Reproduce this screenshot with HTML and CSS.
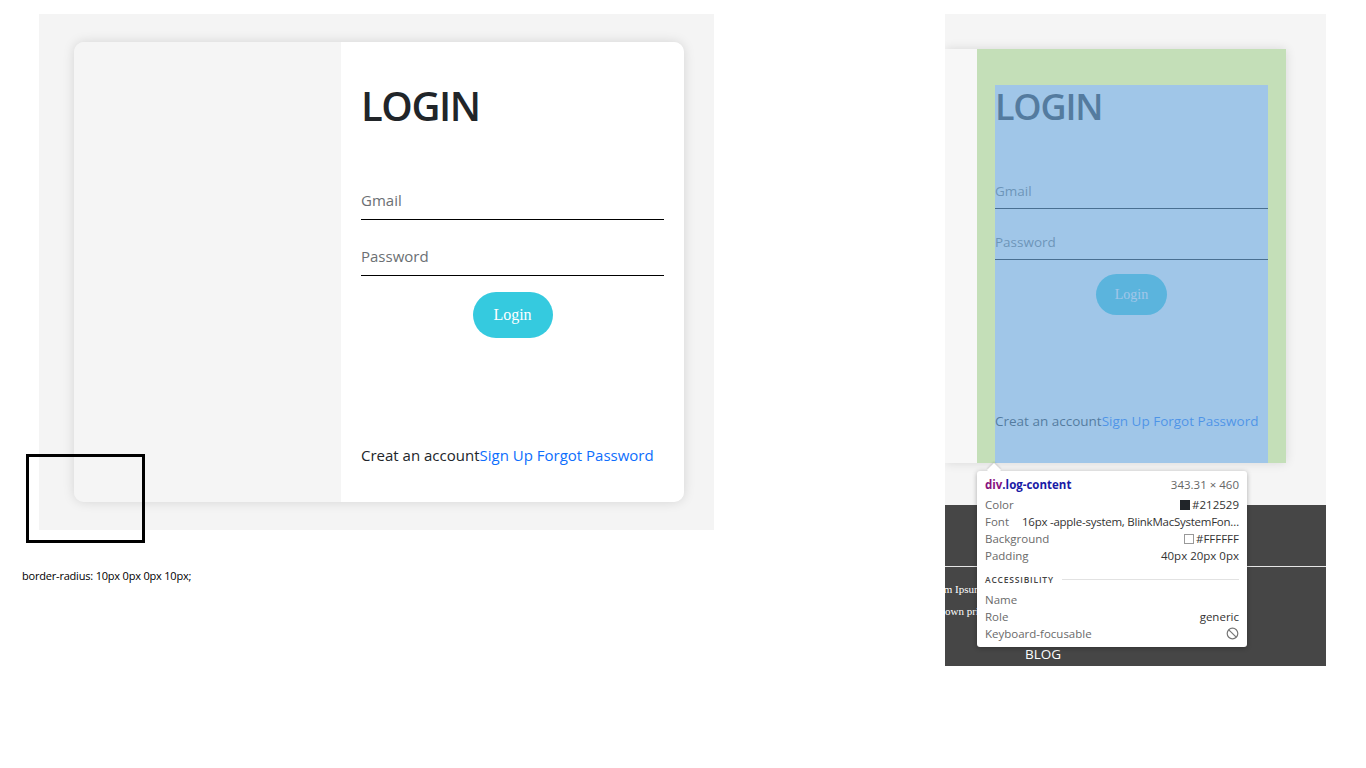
FILE: index.html
```html
<!DOCTYPE html>
<html lang="en">
<head>
<meta charset="utf-8">
<title>Login layout</title>
<link rel="stylesheet" href="styles.css">
</head>
<body>
<div class="stage">
  <div class="shot-left">
    <div class="panel">
      <div class="card">
        <div class="card-side"></div>
        <div class="log-content">
          <h1 class="title">LOGIN</h1>
          <input class="field field-first" type="text" placeholder="Gmail">
          <input class="field" type="password" placeholder="Password">
          <div class="btn-row"><button class="btn" type="button">Login</button></div>
          <p class="foot">Creat an account<a class="lnk">Sign Up</a> <a class="lnk">Forgot Password</a></p>
        </div>
      </div>
    </div>
    <p class="note">border-radius: 10px 0px 0px 10px;</p>
    <div class="marker"></div>
  </div>

  <div class="shot-right">
    <div class="r-top">
      <div class="r-card">
        <div class="r-stub"></div>
        <div class="r-log">
          <h1 class="r-title">LOGIN</h1>
          <input class="r-field r-field-first" type="text" placeholder="Gmail">
          <input class="r-field" type="password" placeholder="Password">
          <div class="btn-row"><button class="r-btn" type="button">Login</button></div>
          <p class="r-foot">Creat an account<a class="lnk">Sign Up</a> <a class="lnk">Forgot Password</a></p>
          <div class="hl-pad"></div>
          <div class="hl-content"></div>
        </div>
      </div>
    </div>
    <div class="r-footer">
      <div class="r-band"></div>
      <p class="r-text r-t1">Lorem Ipsum</p>
      <p class="r-text r-t2">unknown printer</p>
      <p class="r-blog">BLOG</p>
    </div>
    <div class="tip">
      <div class="tip-row tip-head"><span class="sel"><span class="sel-tag">div</span>.log-content</span><span class="dim">343.31 × 460</span></div>
      <div class="tip-row"><span class="lbl">Color</span><span class="val"><i class="sw sw-dark"></i>#212529</span></div>
      <div class="tip-row"><span class="lbl">Font</span><span class="val font-val">16px -apple-system, BlinkMacSystemFon…</span></div>
      <div class="tip-row"><span class="lbl">Background</span><span class="val"><i class="sw sw-white"></i>#FFFFFF</span></div>
      <div class="tip-row"><span class="lbl">Padding</span><span class="val">40px 20px 0px</span></div>
      <div class="tip-sec"><span>ACCESSIBILITY</span><i class="sec-line"></i></div>
      <div class="tip-row"><span class="lbl">Name</span><span class="val"></span></div>
      <div class="tip-row"><span class="lbl">Role</span><span class="val">generic</span></div>
      <div class="tip-row"><span class="lbl">Keyboard-focusable</span><span class="val">
        <svg class="no-icon" width="13" height="13" viewBox="0 0 13 13"><circle cx="6.5" cy="6.5" r="5.3" fill="none" stroke="#777" stroke-width="1.2"/><line x1="2.8" y1="2.8" x2="10.2" y2="10.2" stroke="#777" stroke-width="1.2"/></svg>
      </span></div>
    </div>
  </div>
</div>
</body>
</html>
```

FILE: styles.css
```css
* { box-sizing: border-box; }
html, body { margin: 0; padding: 0; background: #ffffff; }
body { width: 1366px; height: 768px; overflow: hidden; font-family: "Open Sans", "Noto Sans", sans-serif; color: #212529; }

.stage { display: flex; align-items: flex-start; padding: 14px 40px 0 22px; }

/* ---------- left screenshot ---------- */
.shot-left { position: relative; width: 692px; }
.panel { margin-left: 17px; width: 675px; height: 516px; background: #f4f4f4; padding: 28px 30px 0 35px; }
.card { display: flex; height: 460px; width: 610px; border-radius: 10px; box-shadow: 0 0 12px rgba(0,0,0,0.13); overflow: hidden; }
.card-side { width: 267px; background: #f5f5f5; }
.log-content { flex: 1; background: #ffffff; padding: 40px 20px 0; display: flex; flex-direction: column; }
.title { margin: 0 0 52px; font-size: 40px; line-height: 48px; font-weight: 600; color: #212529; letter-spacing: -1.4px; }
.field { display: block; width: 100%; height: 38px; border: 0; border-bottom: 1.5px solid #000; background: transparent; font-family: "Open Sans", sans-serif; font-size: 15px; padding: 0 0 1px; color: #212529; outline: none; }
.field::placeholder { color: #6b6f73; }
.field + .field { margin-top: 18px; }
.btn-row { display: flex; justify-content: center; margin-top: 16px; }
.btn { width: 80px; height: 46px; border: 0; border-radius: 23px; background: #35cadf; color: #ffffff; font-family: "Liberation Serif", serif; font-size: 16px; padding: 0; }
.foot { margin: auto 0 35px; font-size: 15px; line-height: 24px; white-space: nowrap; }
.lnk { color: #0d6efd; }

.note { margin: 39px 0 0; font-size: 11px; line-height: 14px; color: #000; letter-spacing: -0.2px; }
.marker { position: absolute; left: 4px; top: 440px; width: 119px; height: 89px; border: 3px solid #000; }

/* ---------- right screenshot ---------- */
.shot-right { position: relative; margin-left: auto; width: 381px; height: 652px; overflow: hidden; }
.r-top { height: 491px; background: #f5f5f5; padding: 35px 40px 0 0; }
.r-card { display: flex; height: 414px; box-shadow: 0 0 10px rgba(0,0,0,0.12); }
.r-stub { width: 32px; background: #f7f7f7; }
.r-log { position: relative; width: 309px; background: #ffffff; padding: 36px 18px 0; display: flex; flex-direction: column; }
.r-title { margin: 0 0 47px; font-size: 36px; line-height: 43px; font-weight: 600; color: #212529; letter-spacing: -1.2px; }
.r-field { display: block; width: 100%; height: 34px; border: 0; border-bottom: 1.5px solid #000; background: transparent; font-family: "Open Sans", sans-serif; font-size: 13.5px; padding: 0 0 1px; outline: none; }
.r-field::placeholder { color: #6b6f73; }
.r-field + .r-field { margin-top: 17px; }
.r-log .btn-row { margin-top: 14px; }
.r-btn { width: 71px; height: 41px; border: 0; border-radius: 21px; background: #35cadf; color: #ffffff; font-family: "Liberation Serif", serif; font-size: 14px; padding: 0; }
.r-foot { margin: auto 0 31px; font-size: 13.5px; line-height: 22px; white-space: nowrap; }

.hl-pad { position: absolute; inset: 0; border-style: solid; border-color: rgba(147,196,125,0.55); border-width: 36px 18px 0 18px; }
.hl-content { position: absolute; top: 36px; left: 18px; right: 18px; bottom: 0; background: rgba(111,168,220,0.66); }

.r-footer { position: relative; height: 161px; background: #464646; }
.r-band { height: 62px; border-bottom: 1px solid #e6e6e6; }
.r-text { margin: 0; font-family: "Liberation Serif", serif; font-size: 11px; line-height: 14px; color: #ffffff; white-space: nowrap; }
.r-t1 { margin: 15px 0 0 -22px; }
.r-t2 { margin: 8px 0 0 -22px; }
.r-blog { margin: 28px 0 0 80px; font-size: 13.5px; line-height: 16px; color: #ffffff; }

/* ---------- devtools tooltip ---------- */
.tip { position: absolute; left: 32px; top: 457px; width: 270px; height: 176px; background: #ffffff; border-radius: 3px; box-shadow: 0 1px 5px rgba(0,0,0,0.3); padding: 5px 8px 0; font-size: 11.5px; color: #555; }
.tip::before { content: ""; position: absolute; left: 12px; top: -6px; width: 10px; height: 10px; background: #ffffff; transform: rotate(45deg); box-shadow: -1px -1px 2px rgba(0,0,0,0.12); }
.tip-row { position: relative; display: flex; justify-content: space-between; align-items: center; height: 17px; white-space: nowrap; }
.tip-head { height: 17px; margin-bottom: 3px; }
.sel { font-weight: 700; color: #1a1aa6; }
.sel-tag { color: #881280; }
.dim { color: #666; }
.lbl { color: #6a6a6a; }
.val { color: #333; display: flex; align-items: center; }
.font-val { margin-left: 8px; letter-spacing: -0.25px; }
.sw { display: inline-block; width: 10px; height: 10px; margin-right: 2px; }
.sw-dark { background: #212529; }
.sw-white { background: #fff; border: 1px solid #999; }
.tip-sec { display: flex; align-items: center; height: 14px; margin: 8px 0 5px; font-size: 8.5px; font-weight: 600; letter-spacing: 0.8px; color: #444; }
.sec-line { flex: 1; height: 1px; background: #e2e2e2; margin-left: 8px; }
.no-icon { display: block; }
```
